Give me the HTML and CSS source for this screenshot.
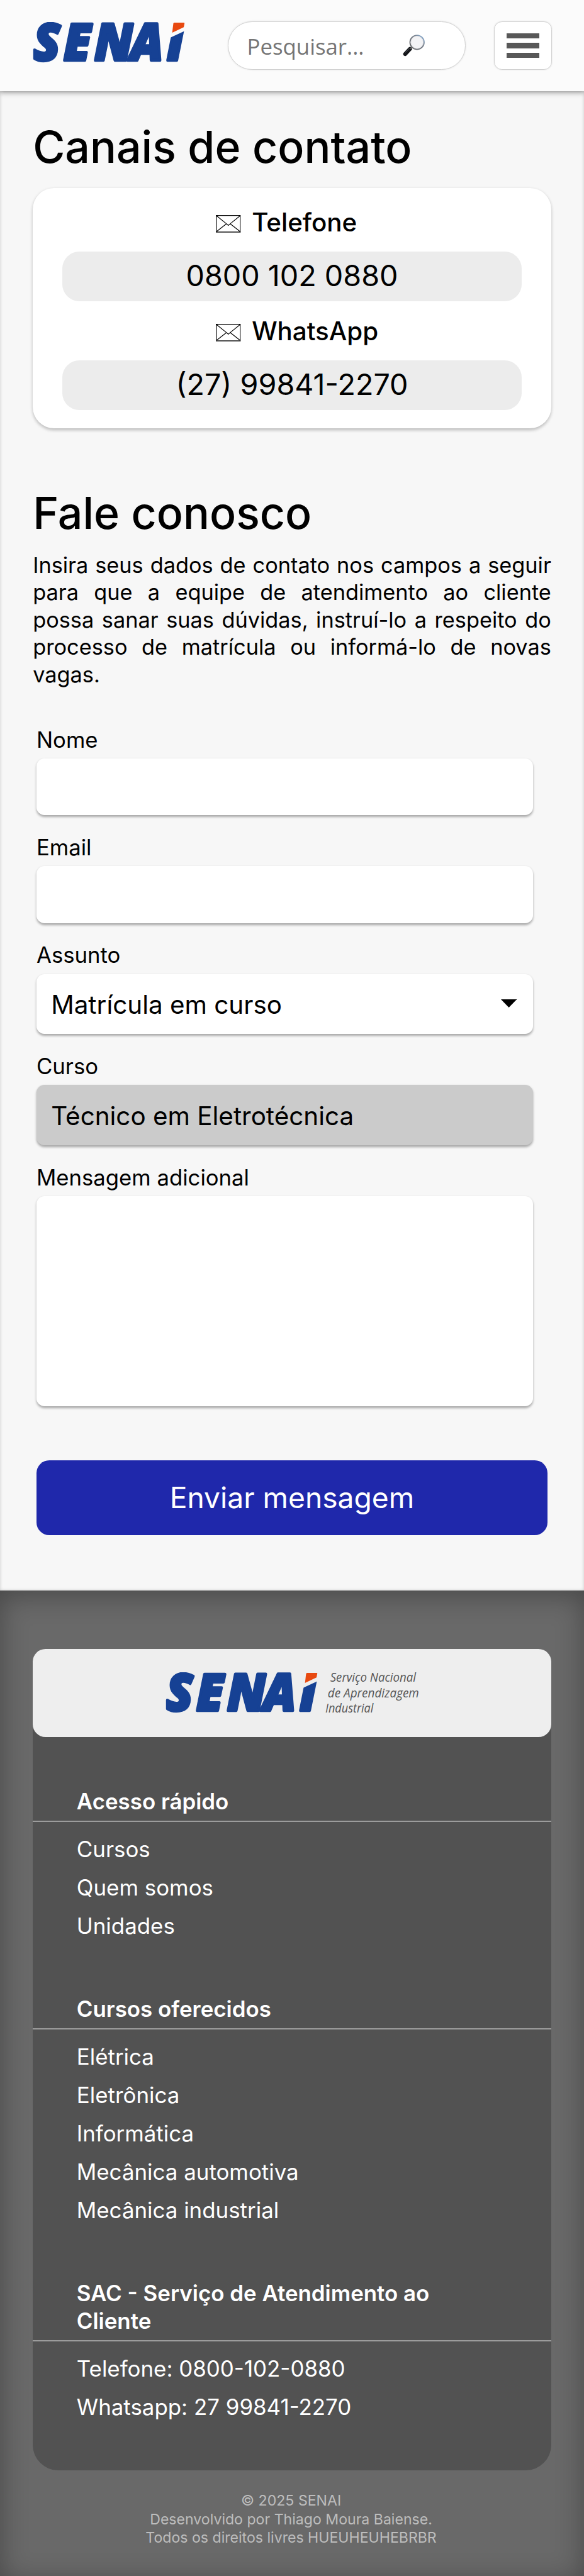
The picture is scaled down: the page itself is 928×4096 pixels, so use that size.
FILE: index.html
```html
<!DOCTYPE html>
<html lang="pt-BR">
<head>
<meta charset="utf-8">
<title>SENAI - Contato</title>
<link rel="stylesheet" href="styles.css">
</head>
<body>
<svg class="defs" width="0" height="0" aria-hidden="true">
  <defs>
    <mask id="accent-cut" maskUnits="userSpaceOnUse" x="-5" y="-5" width="270" height="80">
      <rect x="-5" y="-5" width="270" height="80" fill="#fff"/>
      <polygon points="219,-5 265,-5 265,7.7 219,28.9" fill="#000"/>
    </mask>
    <symbol id="logo" viewBox="0 0 250 67">
      <g mask="url(#accent-cut)">
        <text class="logo-text" transform="scale(.94 1)" x="1.500 54 108 171 234.500" y="63.3">SENAI</text>
      </g>
      <polygon points="232.5,1 249,1 249.6,2 248.3,8.5 229.3,17.5 231.2,2" fill="#e84910"/>
    </symbol>
    <symbol id="envelope" viewBox="0 0 41 29">
      <path d="M.7 .7h39.6v27H.7zM.7 .7l16.8 13.6L20.5 17l3-2.700L40.300 .7M.7 27.500l16.800-13.200M40.300 27.500L23.500 14.300" fill="none" stroke="#000" stroke-width="1.2"/>
      <path d="M0 28h41" stroke="#555" stroke-width="1.800"/>
    </symbol>
  </defs>
</svg>

<header class="header">
  <svg class="logo"><use href="#logo"/></svg>
  <form class="search">
    <input class="search-input" type="text" placeholder="Pesquisar...">
    <svg class="search-icon" viewBox="0 0 37 36">
      <defs>
        <linearGradient id="rim" x1="1" y1="0" x2="0" y2="1">
          <stop offset="0" stop-color="#8fbbe8"/><stop offset=".35" stop-color="#77808c"/><stop offset="1" stop-color="#666"/>
        </linearGradient>
      </defs>
      <path d="M4 32L12 23.500" stroke="#15171b" stroke-width="6.500" stroke-linecap="round"/>
      <path d="M4.500 29.500L11 22.800" stroke="#555a62" stroke-width="1"/>
      <path d="M12.500 23.500L15 21" stroke="#666" stroke-width="2.500"/>
      <circle cx="23.500" cy="12.700" r="11.600" fill="#f3f3f5" stroke="url(#rim)" stroke-width="1.900"/>
      <circle cx="23.500" cy="12.700" r="10.200" fill="none" stroke="#d8d8dc" stroke-width=".8"/>
    </svg>
  </form>
  <button class="menu" aria-label="Menu"><span class="bar"></span><span class="bar"></span><span class="bar"></span></button>
</header>

<main class="main">
  <h1 class="title">Canais de contato</h1>
  <section class="contacts">
    <h2 class="channel"><svg class="envelope"><use href="#envelope"/></svg>Telefone</h2>
    <p class="number">0800 102 0880</p>
    <h2 class="channel"><svg class="envelope"><use href="#envelope"/></svg>WhatsApp</h2>
    <p class="number">(27) 99841-2270</p>
  </section>

  <h1 class="title title-form">Fale conosco</h1>
  <p class="intro">Insira seus dados de contato nos campos a seguir para que a equipe de atendimento ao cliente possa sanar suas dúvidas, instruí-lo a respeito do processo de matrícula ou informá-lo de novas vagas.</p>

  <form class="form">
    <div class="field"><label class="label">Nome</label><div class="control"></div></div>
    <div class="field"><label class="label">Email</label><div class="control"></div></div>
    <div class="field"><label class="label">Assunto</label>
      <div class="control select">Matrícula em curso<svg class="arrow" viewBox="0 0 26 13.500"><path d="M0 0h26L13 13.500z"/></svg></div></div>
    <div class="field"><label class="label">Curso</label><div class="control select disabled">Técnico em Eletrotécnica</div></div>
    <div class="field"><label class="label">Mensagem adicional</label><div class="control message"></div></div>
    <button class="submit" type="button">Enviar mensagem</button>
  </form>
</main>

<footer class="footer">
  <div class="footer-card">
    <div class="brand">
      <svg class="logo brand-logo"><use href="#logo"/></svg>
      <svg class="slogan" viewBox="0 0 160 68">
        <text x="8" y="16" textLength="141" lengthAdjust="spacingAndGlyphs">Serviço Nacional</text>
        <text x="4" y="41" textLength="150" lengthAdjust="spacingAndGlyphs">de Aprendizagem</text>
        <text x="0" y="66" textLength="79" lengthAdjust="spacingAndGlyphs">Industrial</text>
      </svg>
    </div>
    <section class="links">
      <h3 class="links-title">Acesso rápido</h3>
      <ul class="list"><li>Cursos</li><li>Quem somos</li><li>Unidades</li></ul>
    </section>
    <section class="links">
      <h3 class="links-title">Cursos oferecidos</h3>
      <ul class="list"><li>Elétrica</li><li>Eletrônica</li><li>Informática</li><li>Mecânica automotiva</li><li>Mecânica industrial</li></ul>
    </section>
    <section class="links">
      <h3 class="links-title">SAC - Serviço de Atendimento ao Cliente</h3>
      <ul class="list"><li>Telefone: 0800-102-0880</li><li>Whatsapp: 27 99841-2270</li></ul>
    </section>
  </div>
  <p class="copyright">© 2025 SENAI<br>Desenvolvido por Thiago Moura Baiense.<br>Todos os direitos livres HUEUHEUHEBRBR</p>
</footer>
</body>
</html>
```
FILE: styles.css
```css
html { font-size: 9.66667px; }
* { box-sizing: border-box; margin: 0; padding: 0; }
body {
  width: 100%;
  height: 4096px;
  overflow: hidden;
  font-family: Inter, "Liberation Sans", sans-serif;
  font-size: 3.59rem;
  color: #000;
  background: #f7f7f7;
}
.defs { position: absolute; }

.header {
  position: relative;
  display: flex;
  height: 15rem;
  padding: 3.5rem 5.3rem 0 5.4rem;
  background: #fbfbfb;
  box-shadow: 0 .3rem .8rem rgba(0, 0, 0, .3);
}
.logo { width: 25rem; height: 6.7rem; margin-top: .1rem; overflow: visible; }
.logo-text {
  font: italic 800 85px "Open Sans", sans-serif;
  fill: #164194;
  stroke: #164194;
  stroke-width: 4.6;
  stroke-linejoin: round;
}
.search {
  display: flex;
  align-items: center;
  width: 39.1rem;
  height: 8rem;
  margin-left: 7.1rem;
  padding-left: 3rem;
  background: #fff;
  border: 1px solid #d2d2d2;
  border-radius: 4rem;
  box-shadow: 0 0 .3rem rgba(0, 0, 0, .12);
}
.search-input {
  width: 25.6rem;
  height: 6rem;
  padding-top: .2rem;
  border: 0;
  background: none;
  font: 3.6rem "Open Sans", sans-serif;
}
.search-input::placeholder { color: #757575; }
.search-icon { width: 3.7rem; height: 3.6rem; }
.menu {
  display: flex;
  flex-direction: column;
  align-items: center;
  justify-content: center;
  gap: .8rem;
  width: 9.5rem;
  height: 8rem;
  margin-left: 4.6rem;
  background: #fff;
  border: 1px solid #d2d2d2;
  border-radius: 1.3rem;
  box-shadow: 0 0 .3rem rgba(0, 0, 0, .1);
}
.bar { width: 5.4rem; height: .83rem; background: #585858; }

.main {
  height: 246.6rem;
  padding: 5.16rem 5.4rem 0;
  box-shadow: inset 0 0 .6rem rgba(0, 0, 0, .18);
}
.title { font-size: 7.22rem; font-weight: 500; line-height: 8rem; }
.title-form { margin-top: 9.83rem; }
.contacts {
  height: 39.6rem;
  margin-top: 2.74rem;
  padding: 3.26rem 4.8rem 0;
  background: #fff;
  border-radius: 3.5rem;
  box-shadow: 0 .3rem .5rem rgba(0, 0, 0, .24);
}
.channel {
  display: flex;
  align-items: center;
  gap: 1.8rem;
  padding-left: 25.3rem;
  font-size: 4.17rem;
  font-weight: 500;
  line-height: 5rem;
}
.envelope { width: 4.1rem; height: 2.9rem; margin-top: .3rem; }
.number {
  height: 8.1rem;
  margin: 2.27rem 0 2.53rem;
  background: #ececec;
  border-radius: 2.8rem;
  font-size: 4.83rem;
  line-height: 7.9rem;
  text-align: center;
}
.intro { margin-top: 2.36rem; font-size: 3.55rem; line-height: 4.503rem; text-align: justify; }

.form { display: flex; flex-direction: column; gap: 3.08rem; margin-top: 6.27rem; padding: 0 .6rem; }
.label { display: block; line-height: 4.4rem; }
.control {
  width: 81.6rem;
  height: 9.34rem;
  margin-top: .9rem;
  background: #fff;
  border-radius: 1.3rem;
  box-shadow: 0 .3rem .4rem rgba(0, 0, 0, .32);
}
.select {
  display: flex;
  align-items: center;
  justify-content: space-between;
  height: 9.9rem;
  padding: .3rem 2.7rem 0 2.4rem;
  font-size: 4.18rem;
}
.disabled { background: #cbcbcb; }
.arrow { width: 2.6rem; height: 1.35rem; margin-bottom: .4rem; }
.message { height: 34.5rem; }
.submit {
  height: 12.3rem;
  margin-top: 5.92rem;
  padding-bottom: .2rem;
  border: 0;
  border-radius: 2.1rem;
  background: #1f28ab;
  color: #fff;
  font: 4.78rem Inter, sans-serif;
}

.footer {
  height: 162.3rem;
  padding: 9.6rem 5.4rem 0;
  background: #696969;
  box-shadow: inset 0 .8rem 4.5rem rgba(0, 0, 0, .32);
  color: #fff;
}
.footer-card { height: 135.1rem; background: #525252; border-radius: 3.2rem 3.2rem 4.2rem 4.2rem; }
.brand {
  display: flex;
  height: 14.5rem;
  padding: 3.8rem 0 0 21.7rem;
  background: #eee;
  border-radius: 2.1rem;
}
.brand-logo { width: 25.2rem; }
.slogan { width: 16rem; height: 6.8rem; margin: .1rem 0 0 1.2rem; overflow: visible; }
.slogan text { font: italic 21px "Open Sans", sans-serif; fill: #555; }
.links { padding-top: 8.44rem; }
.links-title {
  padding: 0 10rem .81rem 7.2rem;
  border-bottom: .28rem solid #9c9c9c;
  font-size: 3.61rem;
  font-weight: 600;
  line-height: 4.54rem;
}
.list { margin-top: 1.33rem; margin-bottom: -.08rem; padding-left: 7.2rem; list-style: none; font-size: 3.61rem; line-height: 6.3rem; }
.copyright {
  margin-top: 3.6rem;
  padding-right: .3rem;
  color: #bdbdbd;
  font-size: 2.39rem;
  line-height: 3.02rem;
  text-align: center;
}
```
